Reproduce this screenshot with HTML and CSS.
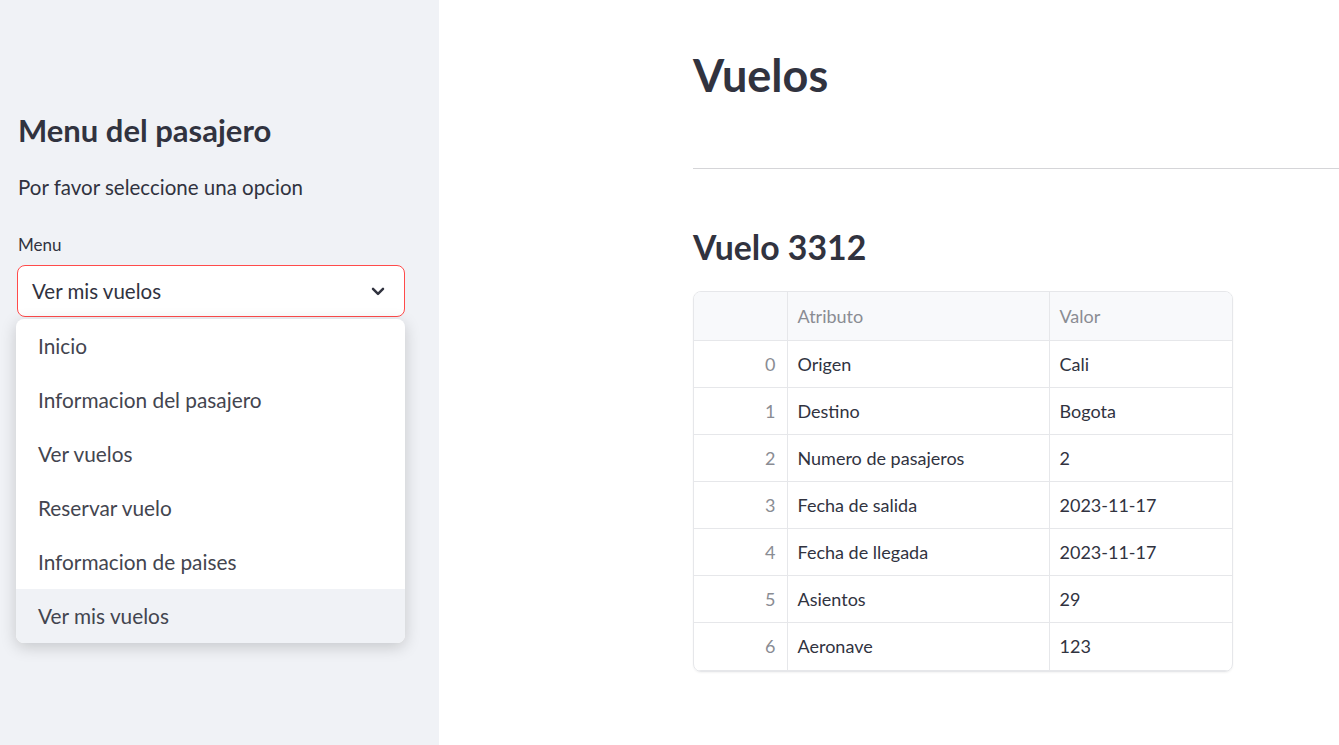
FILE: index.html
```html
<!DOCTYPE html>
<html lang="es">
<head>
<meta charset="utf-8">
<title>Vuelos</title>
<link rel="stylesheet" href="styles.css">
</head>
<body>
<div class="app">
  <aside class="sidebar">
    <h2 class="side-title">Menu del pasajero</h2>
    <p class="side-text">Por favor seleccione una opcion</p>
    <label class="side-label">Menu</label>
    <div class="select-wrap">
      <div class="select">
        <span>Ver mis vuelos</span>
        <svg class="chev" width="20" height="20" viewBox="0 0 24 24"><path d="M6 9.5l6 6 6-6" fill="none" stroke="#31333f" stroke-width="3" stroke-linecap="round" stroke-linejoin="round"/></svg>
      </div>
      <ul class="menu">
        <li>Inicio</li>
        <li>Informacion del pasajero</li>
        <li>Ver vuelos</li>
        <li>Reservar vuelo</li>
        <li>Informacion de paises</li>
        <li class="active">Ver mis vuelos</li>
      </ul>
    </div>
  </aside>
  <main class="main">
    <h1 class="title">Vuelos</h1>
    <hr class="rule">
    <h3 class="subtitle">Vuelo 3312</h3>
    <div class="table-box">
      <table class="df">
        <thead>
          <tr><th class="idx"></th><th class="c1">Atributo</th><th class="c2">Valor</th></tr>
        </thead>
        <tbody>
          <tr><td class="idx">0</td><td>Origen</td><td>Cali</td></tr>
          <tr><td class="idx">1</td><td>Destino</td><td>Bogota</td></tr>
          <tr><td class="idx">2</td><td>Numero de pasajeros</td><td>2</td></tr>
          <tr><td class="idx">3</td><td>Fecha de salida</td><td>2023-11-17</td></tr>
          <tr><td class="idx">4</td><td>Fecha de llegada</td><td>2023-11-17</td></tr>
          <tr><td class="idx">5</td><td>Asientos</td><td>29</td></tr>
          <tr><td class="idx">6</td><td>Aeronave</td><td>123</td></tr>
        </tbody>
      </table>
    </div>
  </main>
</div>
</body>
</html>
```

FILE: styles.css
```css
* { box-sizing: border-box; }
html, body {
  margin: 0;
  padding: 0;
  height: 745px;
  overflow: hidden;
  background: #ffffff;
  font-family: Lato, "Liberation Sans", sans-serif;
  color: #31333f;
}
.app {
  display: flex;
  height: 745px;
}
.sidebar {
  width: 439px;
  flex: none;
  background: #f0f2f6;
  padding: 110px 34px 0 18px;
}
.side-title {
  margin: 0;
  font-size: 31px;
  font-weight: 700;
  line-height: 40px;
  color: #31333f;
}
.side-text {
  margin: 22px 0 0 0;
  font-size: 20.5px;
  line-height: 30px;
}
.side-label {
  display: block;
  margin-top: 31px;
  font-size: 17px;
  line-height: 24px;
}
.select-wrap {
  position: relative;
  margin-top: 8px;
}
.select {
  height: 52px;
  margin-left: -1px;
  border: 1px solid #ff4b4b;
  border-radius: 8px;
  background: #ffffff;
  display: flex;
  align-items: center;
  justify-content: space-between;
  padding: 0 16px 0 14px;
  font-size: 20.5px;
}
.chev { display: block; }
.menu {
  position: absolute;
  left: -2px;
  width: 389px;
  top: 54px;
  margin: 0;
  padding: 0;
  list-style: none;
  background: #ffffff;
  border-radius: 8px;
  box-shadow: 0 4px 16px rgba(0, 0, 0, 0.18);
  overflow: hidden;
}
.menu li {
  height: 54px;
  display: flex;
  align-items: center;
  padding-left: 22px;
  padding-bottom: 2px;
  font-size: 20.8px;
  color: #43454f;
}
.menu li.active {
  background: #f0f2f6;
}
.main {
  flex: 1;
  min-width: 0;
  padding: 47px 0 0 254px;
  overflow: hidden;
}
.title {
  margin: 0;
  font-size: 45px;
  line-height: 56px;
  font-weight: 700;
  color: #31333f;
}
.rule {
  margin: 65px 0 0 0;
  border: none;
  border-top: 1px solid #d5d5d8;
  height: 0;
}
.subtitle {
  margin: 57px 0 0 0;
  font-size: 33.8px;
  line-height: 42px;
  font-weight: 700;
}
.table-box {
  margin-top: 23px;
  width: 540px;
  border: 1px solid #e6e7ea;
  border-radius: 8px;
  overflow: hidden;
  box-shadow: 0 1px 2px rgba(0,0,0,0.05);
}
.df {
  width: 100%;
  border-collapse: collapse;
  font-size: 18px;
  table-layout: fixed;
}
.df th, .df td {
  border-right: 1px solid #e6e7ea;
  border-bottom: 1px solid #e6e7ea;
  text-align: left;
  padding: 0 10px;
  font-weight: 400;
  white-space: nowrap;
}
.df th:last-child, .df td:last-child { border-right: none; }
.df thead th {
  height: 48px;
  background: #f8f9fb;
  color: #8a8c93;
}
.df tbody td {
  height: 47px;
}
.df tbody tr:last-child td {
  height: 48px;
}
.df .idx {
  width: 93px;
  text-align: right;
  color: #8a8c93;
  padding-right: 11px;
}
.df .c1 { width: 262px; }
```
